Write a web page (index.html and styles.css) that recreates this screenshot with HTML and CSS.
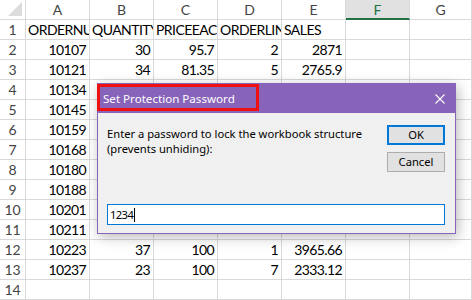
FILE: index.html
```html
<!DOCTYPE html>
<html>
<head>
<meta charset="utf-8">
<link rel="stylesheet" href="styles.css">
</head>
<body>
<div class="sheet">
  <div class="hd corner"><span class="tri"></span></div>
  <div class="hd col">A</div><div class="hd col">B</div><div class="hd col">C</div><div class="hd col">D</div><div class="hd col">E</div><div class="hd col sel">F</div><div class="hd col">G</div>

  <div class="hd rn">1</div><div class="c">ORDERNUMBER</div><div class="c">QUANTITYORDERED</div><div class="c">PRICEEACH</div><div class="c">ORDERLINENUMBER</div><div class="c">SALES</div><div class="c"></div><div class="c"></div>
  <div class="hd rn">2</div><div class="c n">10107</div><div class="c n">30</div><div class="c n">95.7</div><div class="c n">2</div><div class="c n">2871</div><div class="c"></div><div class="c"></div>
  <div class="hd rn">3</div><div class="c n">10121</div><div class="c n">34</div><div class="c n">81.35</div><div class="c n">5</div><div class="c n">2765.9</div><div class="c"></div><div class="c"></div>
  <div class="hd rn">4</div><div class="c n">10134</div><div class="c"></div><div class="c"></div><div class="c"></div><div class="c"></div><div class="c"></div><div class="c"></div>
  <div class="hd rn">5</div><div class="c n">10145</div><div class="c"></div><div class="c"></div><div class="c"></div><div class="c"></div><div class="c"></div><div class="c"></div>
  <div class="hd rn">6</div><div class="c n">10159</div><div class="c"></div><div class="c"></div><div class="c"></div><div class="c"></div><div class="c"></div><div class="c"></div>
  <div class="hd rn">7</div><div class="c n">10168</div><div class="c"></div><div class="c"></div><div class="c"></div><div class="c"></div><div class="c"></div><div class="c"></div>
  <div class="hd rn">8</div><div class="c n">10180</div><div class="c"></div><div class="c"></div><div class="c"></div><div class="c"></div><div class="c"></div><div class="c"></div>
  <div class="hd rn">9</div><div class="c n">10188</div><div class="c"></div><div class="c"></div><div class="c"></div><div class="c"></div><div class="c"></div><div class="c"></div>
  <div class="hd rn">10</div><div class="c n">10201</div><div class="c"></div><div class="c"></div><div class="c"></div><div class="c"></div><div class="c"></div><div class="c"></div>
  <div class="hd rn">11</div><div class="c n">10211</div><div class="c"></div><div class="c"></div><div class="c"></div><div class="c"></div><div class="c"></div><div class="c"></div>
  <div class="hd rn">12</div><div class="c n">10223</div><div class="c n">37</div><div class="c n">100</div><div class="c n">1</div><div class="c n">3965.66</div><div class="c"></div><div class="c"></div>
  <div class="hd rn">13</div><div class="c n">10237</div><div class="c n">23</div><div class="c n">100</div><div class="c n">7</div><div class="c n">2333.12</div><div class="c"></div><div class="c"></div>
  <div class="hd rn">14</div><div class="c"></div><div class="c"></div><div class="c"></div><div class="c"></div><div class="c"></div><div class="c"></div><div class="c"></div>
</div>

<div class="dialog">
  <div class="titlebar">
    <span class="title">Set Protection Password</span>
    <svg class="close" width="10" height="10" viewBox="0 0 10 10"><path d="M0.5 0.5L9.5 9.5M9.5 0.5L0.5 9.5" stroke="#fff" stroke-width="1.1" fill="none"/></svg>
  </div>
  <div class="body">
    <div class="top">
      <div class="msg">Enter a password to lock the workbook structure<br>(prevents unhiding):</div>
      <div class="buttons">
        <div class="btn ok">OK</div>
        <div class="btn">Cancel</div>
      </div>
    </div>
    <div class="input"><span class="val">1234</span><span class="caret"></span></div>
  </div>
</div>
<div class="highlight"></div>
</body>
</html>
```

FILE: styles.css
```css
html, body {
  margin: 0;
  padding: 0;
  background: #fff;
  overflow: hidden;
}
body {
  width: 472px;
  height: 300px;
  position: relative;
  font-family: Lato, "Liberation Sans", sans-serif;
}
.sheet {
  display: grid;
  grid-template-columns: 26px repeat(6, 64px) 62px;
  grid-template-rows: repeat(15, 20px);
  font-size: 14px;
  color: #000;
}
.sheet > div {
  box-sizing: border-box;
  border-right: 1px solid #d9d9d9;
  border-bottom: 1px solid #d9d9d9;
  overflow: hidden;
  white-space: nowrap;
  line-height: 20px;
}
.hd {
  background: #fff;
  color: #444;
  text-align: center;
  font-size: 14px;
}
.corner {
  position: relative;
}
.tri {
  position: absolute;
  right: 3px;
  bottom: 3px;
  width: 0;
  height: 0;
  border-left: 14px solid transparent;
  border-bottom: 14px solid #dcdcdc;
}
.col.sel {
  background: #e1e1e1;
  color: #217346;
  border-bottom: 2px solid #217346;
}
.c {
  padding: 0 2px;
  text-align: left;
  letter-spacing: -0.55px;
}
.c.n {
  text-align: right;
  letter-spacing: -0.6px;
  padding-right: 3px;
}
.dialog {
  position: absolute;
  left: 97px;
  top: 83px;
  width: 359px;
  height: 151px;
  box-sizing: border-box;
  border: 1px solid #8763b9;
  background: #f0f0f0;
  box-shadow: 2px 3px 12px rgba(0,0,0,0.28);
  font-family: "Noto Sans", sans-serif;
  font-size: 11.2px;
  color: #000;
  display: flex;
  flex-direction: column;
}
.titlebar {
  height: 29px;
  background: #8763b9;
  color: #fff;
  display: flex;
  align-items: center;
  justify-content: space-between;
  padding: 0 10px 0 5px;
  font-size: 11.6px;
}
.close {
  display: block;
}
.body {
  padding: 12px 10px 8px 9px;
  display: flex;
  flex-direction: column;
}
.top {
  display: flex;
  justify-content: space-between;
}
.msg {
  line-height: 15px;
  padding-top: 1px;
}
.buttons {
  display: flex;
  flex-direction: column;
  gap: 7px;
}
.btn {
  box-sizing: border-box;
  width: 58px;
  height: 20px;
  background: #e1e1e1;
  border: 1px solid #adadad;
  text-align: center;
  line-height: 18px;
}
.btn.ok {
  border: 2px solid #0078d7;
  line-height: 16px;
}
.input {
  margin-top: 32px;
  box-sizing: border-box;
  height: 21px;
  background: #fff;
  border: 1px solid #0078d7;
  padding-left: 2px;
  line-height: 19px;
  display: flex;
  align-items: center;
}
.val {
  letter-spacing: -0.6px;
}
.caret {
  display: inline-block;
  width: 1px;
  height: 14px;
  background: #000;
  margin-left: 1px;
}
.highlight {
  position: absolute;
  left: 97px;
  top: 84px;
  width: 162px;
  height: 27px;
  box-sizing: border-box;
  border: 3px solid #ee1111;
}
```
